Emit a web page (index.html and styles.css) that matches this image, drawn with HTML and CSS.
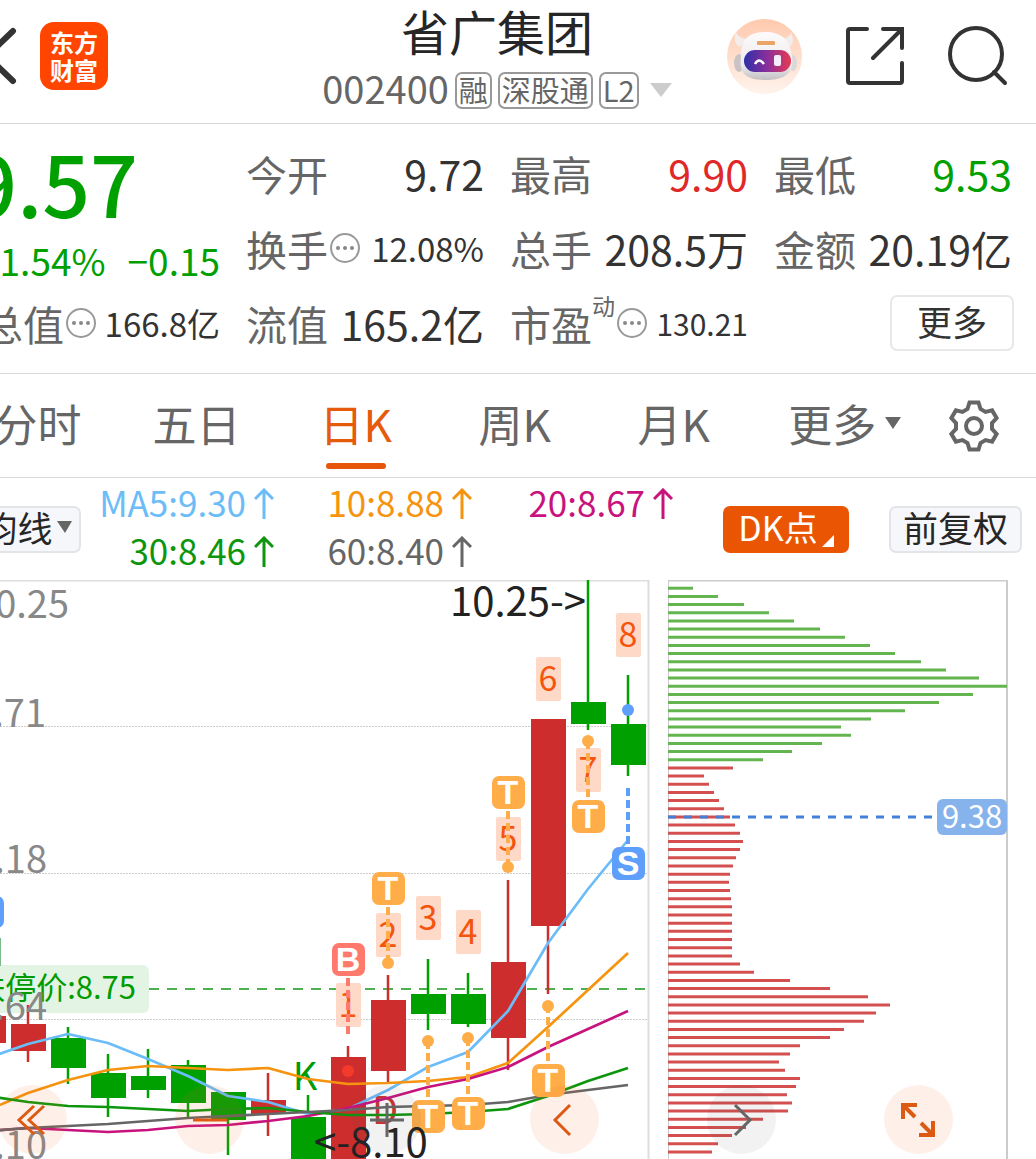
FILE: index.html
```html
<!DOCTYPE html>
<html lang="zh-CN">
<head>
<meta charset="utf-8">
<meta name="viewport" content="width=device-width, initial-scale=1">
<title>省广集团 002400</title>
<link rel="stylesheet" href="styles.css">
</head>
<body>
<div class="screen">
  <header class="topbar">
    <div class="topbar-left">
      <button class="icon-btn" aria-label="返回">
        <svg width="36" height="60" viewBox="0 0 36 60"><path d="M31 5 5 30 31 55" fill="none" stroke="#333" stroke-width="6" stroke-linecap="round"/></svg>
      </button>
      <a class="logo" href="#"><span>东方</span><span>财富</span></a>
    </div>
    <div class="title">
      <h1>省广集团</h1>
      <div class="subtitle">
        <span class="code">002400</span>
        <span class="tag">融</span><span class="tag">深股通</span><span class="tag">L2</span>
        <svg class="drop" width="22" height="16" viewBox="0 0 22 16"><path d="M0 1H22L11 15Z" fill="#ccc"/></svg>
      </div>
    </div>
    <div class="topbar-right">
      <button class="icon-btn" aria-label="智能助手">
        <svg width="75" height="75" viewBox="0 0 75 75">
          <defs>
            <linearGradient id="halo" x1="0" y1="0" x2="0" y2="1"><stop offset="0" stop-color="#ffc9ae"/><stop offset="1" stop-color="#fff3ec"/></linearGradient>
            <linearGradient id="visor" x1="0" y1="0" x2="1" y2="0"><stop offset="0" stop-color="#2f2fa8"/><stop offset=".5" stop-color="#8a2f9c"/><stop offset="1" stop-color="#e63b50"/></linearGradient>
            <linearGradient id="shell" x1="0" y1="0" x2="0" y2="1"><stop offset="0" stop-color="#fdfbfb"/><stop offset=".7" stop-color="#eceaec"/><stop offset="1" stop-color="#c3bfc3"/></linearGradient>
          </defs>
          <circle cx="37.500" cy="37.500" r="37.500" fill="url(#halo)"/>
          <path d="M9 13Q5 24 13 28L21 20Q11 20 9 13ZM64 13Q69 24 62 28L53 20Q63 20 64 13Z" fill="#f3edec"/>
          <ellipse cx="12" cy="44" rx="5" ry="9" fill="#c9c3c6"/><ellipse cx="66" cy="44" rx="4" ry="8" fill="#dcd8da"/>
          <path d="M14 38C14 20 22 13 38 13S63 20 65 38C67 54 58 61 38 61S12 54 14 38Z" fill="url(#shell)"/>
          <rect x="30" y="22" width="18" height="4" rx="1" fill="#eaa465"/>
          <rect x="17" y="31" width="47" height="22" rx="11" fill="url(#visor)"/>
          <path d="M28 45q4-7 9 0" fill="none" stroke="#fff" stroke-width="2.500"/>
          <rect x="47" y="36" width="7" height="11" rx="2" fill="#f3eefc"/>
        </svg>
      </button>
      <button class="icon-btn" aria-label="分享">
        <svg width="58" height="58" viewBox="0 0 58 58"><path d="M21 2H4Q2 2 2 4V54Q2 56 4 56H54Q56 56 56 54V36M37 2H56V21M56 2 27 31" fill="none" stroke="#333" stroke-width="4" stroke-linecap="round"/></svg>
      </button>
      <button class="icon-btn" aria-label="搜索">
        <svg width="60" height="60" viewBox="0 0 60 60"><circle cx="28" cy="28" r="26" fill="none" stroke="#333" stroke-width="4"/><path d="M46 46 57 57" stroke="#333" stroke-width="4" stroke-linecap="round"/></svg>
      </button>
    </div>
  </header>

  <section class="stats">
    <div class="price down">9.57</div>
    <div class="stat"><span class="label">今开</span><span class="value">9.72</span></div>
    <div class="stat"><span class="label">最高</span><span class="value up">9.90</span></div>
    <div class="stat"><span class="label">最低</span><span class="value down">9.53</span></div>

    <div class="change down"><span>-1.54%</span><span>−0.15</span></div>
    <div class="stat"><span class="label">换手</span><svg class="info" width="30" height="30" viewBox="0 0 30 30"><use href="#more-dots"/></svg><span class="value mid">12.08%</span></div>
    <div class="stat"><span class="label">总手</span><span class="value">208.5万</span></div>
    <div class="stat"><span class="label">金额</span><span class="value">20.19亿</span></div>

    <div class="stat"><span class="label">总值</span><svg class="info" width="30" height="30" viewBox="0 0 30 30"><g id="more-dots"><circle cx="15" cy="15" r="14" fill="none" stroke="#999" stroke-width="2"/><circle cx="8" cy="15" r="2" fill="#888"/><circle cx="15" cy="15" r="2" fill="#888"/><circle cx="22" cy="15" r="2" fill="#888"/></g></svg><span class="value mid">166.8亿</span></div>
    <div class="stat"><span class="label">流值</span><span class="value">165.2亿</span></div>
    <div class="stat"><span class="label">市盈<sup>动</sup></span><svg class="info" width="30" height="30" viewBox="0 0 30 30"><use href="#more-dots"/></svg><span class="value small">130.21</span></div>
    <div class="stat"><button class="more">更多</button></div>
  </section>

  <nav class="tabs">
    <button>分时</button>
    <button>五日</button>
    <button class="active">日K</button>
    <button>周K</button>
    <button>月K</button>
    <button class="tab-more">更多<svg width="16" height="14" viewBox="0 0 16 14"><path d="M0 1H16L8 13Z" fill="#666"/></svg></button>
    <button class="settings" aria-label="设置">
      <svg width="52" height="52" viewBox="-26 -26 52 52" fill="none" stroke="#666" stroke-width="4"><path d="M-4.500-23.500H4.500L6.500-17 11.500-14.100 18.100-15.600 22.600-7.900 18-2.900V2.900L22.600 7.900 18.100 15.600 11.500 14.100 6.500 17 4.500 23.500H-4.500L-6.500 17-11.500 14.100-18.100 15.600-22.600 7.900-18 2.900V-2.900L-22.600-7.900-18.100-15.600-11.500-14.100-6.500-17Z"/><circle r="8"/></svg>
    </button>
  </nav>

  <section class="indicators">
    <button class="chip average">均线<svg width="15" height="12" viewBox="0 0 15 12"><path d="M0 0H15L8 12Z" fill="#666"/></svg></button>
    <div class="legend">
      <span class="ma5">MA5:9.30<svg width="20" height="32" viewBox="0 0 20 32"><path id="arrow" d="M10 31V2M1 11 10 2 19 11" fill="none" stroke="currentColor" stroke-width="3"/></svg></span>
      <span class="ma10">10:8.88<svg width="20" height="32" viewBox="0 0 20 32"><use href="#arrow"/></svg></span>
      <span class="ma20">20:8.67<svg width="20" height="32" viewBox="0 0 20 32"><use href="#arrow"/></svg></span>
      <span class="ma30">30:8.46<svg width="20" height="32" viewBox="0 0 20 32"><use href="#arrow"/></svg></span>
      <span class="ma60">60:8.40<svg width="20" height="32" viewBox="0 0 20 32"><use href="#arrow"/></svg></span>
    </div>
    <button class="chip dk">DK点<svg width="12" height="12" viewBox="0 0 12 12"><path d="M12 0V12H0Z" fill="#fff"/></svg></button>
    <button class="chip adjust">前复权</button>
  </section>

  <section class="charts">
    <svg class="kline" viewBox="-42 580 692 579" role="img" aria-label="日K线图">
      <path d="M-42 580.500H648.500V1159" fill="none" stroke="#ddd" stroke-width="2"/>
      <path d="M-42 726.500H648M-42 873.500H648M-42 1019.500H648" stroke="#ccc" stroke-dasharray="2 1"/>
      <rect x="-60" y="965" width="209" height="48" rx="6" fill="#e3f4e5"/>
      <path d="M149 989H648" stroke="#4caf50" stroke-width="2" stroke-dasharray="10 8"/>
      <text x="136" y="999" class="t-limit" text-anchor="end">跌停价:8.75</text>
      <g id="candles"></g>
      <rect x="-29" y="896" width="33" height="32" rx="7" fill="#5f9ffc"/>
      <path d="M0 938V966" stroke="#7cb98a" stroke-width="2"/>
      <g class="axis" text-anchor="end">
        <text x="69" y="618">10.25</text><text x="46" y="727">9.71</text><text x="47" y="873">9.18</text><text x="47" y="1020">8.64</text><text x="47" y="1159">8.10</text>
      </g>
      <g class="signal" text-anchor="middle">
        <text x="305" y="1090" fill="#009b00">K</text><text x="385" y="1124" fill="#c33">D</text>
      </g>
      <g fill="none" stroke-width="2.700" stroke-linejoin="round">
        <path stroke="#6cbcf8" d="M-12 1058 28 1044 68 1034 108 1043 148 1059 188 1076 228 1096 268 1102 308 1114 348 1109 388 1090 428 1067 468 1052 508 1011 548 943 588 889 628 840"/>
        <path stroke="#f6930f" d="M-12 1110 28 1093 68 1080 108 1070 148 1066 188 1068 228 1070 268 1068 308 1079 348 1084 388 1083 428 1081 468 1077 508 1063 548 1027 588 990 628 953"/>
        <path stroke="#c8127d" d="M-12 1131 28 1128 68 1130 108 1132 148 1130 188 1126 228 1125 268 1121 308 1116 348 1108 388 1098 428 1087 468 1079 508 1067 548 1047 588 1029 628 1011"/>
        <path stroke="#0d960d" d="M-12 1096 28 1102 68 1106 108 1107 148 1109 188 1111 228 1109 268 1108 308 1112 348 1115 388 1115 428 1114 468 1112 508 1109 548 1096 588 1081 628 1068"/>
        <path stroke="#666" d="M-12 1131 28 1128 108 1124 188 1118 268 1114 348 1110 388 1107 428 1106 468 1105 508 1102 548 1095 588 1090 628 1085"/>
      </g>
      <g id="counts" class="count" text-anchor="middle"></g>
      <g id="marks" class="mark" text-anchor="middle"></g>
      <g class="extreme"><text x="586" y="616" text-anchor="end">10.25-&gt;</text><text x="314" y="1157">&lt;-8.10</text></g>
    </svg>
    <svg class="chips" viewBox="668 580 340 579" role="img" aria-label="筹码分布">
      <path d="M668 1159V580.500H1007V1159" fill="none" stroke="#ccc" stroke-width="2"/>
      <g id="bars" stroke-width="3"></g>
      <path d="M668 817H935" stroke="#4280d8" stroke-width="3" stroke-dasharray="8 8"/>
      <rect x="937" y="799" width="70" height="36" rx="6" fill="#86b3ec"/>
      <text x="972" y="828" class="t-price" text-anchor="middle">9.38</text>
    </svg>
    <div class="floaters">
      <button aria-label="快退"><svg width="40" height="40" viewBox="-20 -20 40 40"><path d="M1-14-14 0 1 14M11-14-4 0 11 14"/></svg></button>
      <button aria-label="缩小"><svg width="40" height="40" viewBox="-20 -20 40 40"><path d="M-17 0H17"/></svg></button>
      <button class="mute" aria-label="放大"><svg width="40" height="40" viewBox="-20 -20 40 40"><path d="M-17 0H17M0-17V17"/></svg></button>
      <button aria-label="左移"><svg width="40" height="40" viewBox="-20 -20 40 40"><path d="M6-15-9 0 6 15"/></svg></button>
      <button class="mute" aria-label="右移"><svg width="40" height="40" viewBox="-20 -20 40 40"><path d="M-6-15 9 0-6 15"/></svg></button>
      <button aria-label="全屏"><svg width="40" height="40" viewBox="-20 -20 40 40"><path stroke-width="4" d="M-15-1V-15H-1M-15-15-3-3M15 1V15H1M15 15 3 3"/></svg></button>
    </div>
  </section>
</div>
<script src="chart.js"></script>
</body>
</html>
```
FILE: styles.css
```css
* { box-sizing: border-box; }
body {
  margin: 0;
  background: #fff;
  color: #333;
  font-family: "Noto Sans CJK SC", "Noto Sans", sans-serif;
  overflow-x: hidden;
}
button {
  border: 0;
  padding: 0;
  background: none;
  color: inherit;
  font: inherit;
  cursor: pointer;
}
svg { display: block; flex: none; }

/* The screen is wider than the viewport and runs off its left edge. */
.screen { margin-left: -42px; overflow: hidden; }

.topbar {
  display: grid;
  grid-template-columns: 1fr auto 1fr;
  height: 124px;
  border-bottom: 1px solid #d8d8d8;
}
.topbar-left, .topbar-right { display: flex; align-items: center; height: 112px; }
.topbar-left { padding-left: 24px; gap: 22px; }
.topbar-right { justify-content: flex-end; padding-right: 28px; gap: 44px; }
.logo {
  display: flex;
  flex-direction: column;
  justify-content: center;
  width: 68px;
  height: 68px;
  border-radius: 14px;
  background: #ff4500;
  color: #fff;
  font-size: 24px;
  font-weight: 700;
  line-height: 28px;
  text-align: center;
  text-decoration: none;
}
.title { text-align: center; }
.title h1 {
  margin: 0;
  color: #262626;
  font-size: 48px;
  font-weight: 400;
  line-height: 60px;
}
.subtitle { display: flex; align-items: center; gap: 6px; height: 60px; color: #666; }
.code { font-size: 38px; line-height: 52px; padding-bottom: 4px; }
.tag {
  height: 37px;
  padding: 0 2px;
  border: 2px solid #999;
  border-radius: 7px;
  font-size: 29px;
  line-height: 31px;
}
.drop { margin-left: 5px; }

.stats {
  display: grid;
  grid-template-columns: repeat(4, minmax(0, 1fr));
  grid-auto-rows: 75px;
  column-gap: 26px;
  padding: 11px 24px 13px;
  border-bottom: 1px solid #d8d8d8;
}
.stat { display: flex; align-items: center; white-space: nowrap; font-size: 41px; }
.label { color: #666; }
.label sup { font-size: 23px; line-height: 0; vertical-align: 26px; }
.value { margin-left: auto; }
.mid { font-size: 33px; }
.small { font-size: 30px; }
.info { margin-left: 2px; }
.up { color: #e02828; }
.down { color: #00a000; }
.price {
  justify-self: end;
  padding-right: 82px;
  font-size: 84px;
  font-weight: 500;
  line-height: 94px;
}
.change {
  display: flex;
  justify-content: flex-end;
  align-items: flex-end;
  gap: 22px;
  font-size: 37px;
  line-height: 50px;
}
.more {
  width: 124px;
  height: 56px;
  margin-left: auto;
  margin-right: -2px;
  padding-bottom: 4px;
  border: 2px solid #e8e8e8;
  border-radius: 7px;
  font-size: 35px;
  line-height: 48px;
}

.tabs {
  display: grid;
  grid-template-columns: repeat(6, 9fr) 7fr;
  height: 104px;
  border-bottom: 1px solid #d8d8d8;
  color: #666;
  font-size: 44px;
}
.tabs button {
  position: relative;
  display: flex;
  align-items: center;
  justify-content: center;
  padding-bottom: 5px;
  white-space: nowrap;
}
.tabs .settings { padding-bottom: 0; }
.tabs .active { color: #e65a0c; }
.tabs .active::after {
  content: "";
  position: absolute;
  bottom: 8px;
  width: 60px;
  height: 6px;
  border-radius: 3px;
  background: #e6550a;
}
.tabs .tab-more { gap: 9px; padding-left: 24px; }

.indicators { display: flex; align-items: center; height: 102px; padding: 0 14px 0 23px; }
.chip {
  display: flex;
  align-items: center;
  justify-content: center;
  gap: 4px;
  width: 100px;
  height: 47px;
  padding-bottom: 4px;
  border: 2px solid #e2e4e8;
  border-radius: 7px;
  background: #f6f7fa;
  color: #262626;
  font-size: 35px;
  line-height: 40px;
  white-space: nowrap;
}
.average { padding-right: 8px; }
.legend {
  display: grid;
  grid-template-columns: 193px 198px 201px;
  grid-auto-rows: 48px;
  font-size: 35px;
  line-height: 42px;
}
.legend span {
  display: flex;
  align-items: center;
  justify-content: flex-end;
  gap: 8px;
  padding-bottom: 6px;
}
.legend svg { margin-top: 4px; }
.dk {
  width: 126px;
  margin-left: auto;
  border-color: #ea5504;
  background: #ea5504;
  color: #fff;
  font-size: 34px;
}
.dk svg { align-self: flex-end; }
.adjust { width: 133px; margin-left: 40px; }
.ma5 { color: #6cbcf8; }
.ma10 { color: #f6930f; }
.ma20 { color: #c8127d; }
.ma30 { color: #0d960d; }
.ma60 { color: #666; }

.charts {
  position: relative;
  display: grid;
  grid-template-columns: 692fr 340fr;
  column-gap: 18px;
  padding-right: 28px;
}
.charts > svg { width: 100%; height: auto; }
.axis { font-size: 38px; fill: #888; }
.t-limit { font-size: 31px; fill: #009b00; }
.t-price { font-size: 31px; fill: #fff; }
.signal { font-size: 38px; }
.count { font-size: 34px; fill: #f5540c; }
.mark { font-family: "Liberation Sans", Arial, sans-serif; font-size: 34px; font-weight: 700; fill: #fff; }
.extreme { font-size: 40px; fill: #222; }

.floaters {
  position: absolute;
  right: 83px;
  bottom: 5px;
  left: 40px;
  display: flex;
  justify-content: space-between;
}
.floaters button {
  display: grid;
  place-items: center;
  width: 69px;
  height: 69px;
  border-radius: 50%;
  background: rgba(250, 110, 40, .1);
}
.floaters .mute { background: rgba(90, 90, 90, .08); }
.floaters svg { fill: none; stroke: #dc5a14; stroke-width: 3px; }
.floaters .mute svg { stroke: #666; }
```
FILE: chart.js
```js
const RED = '#ce2d2d';
const GREEN = '#00a000';

// centre x, colour, wick top, body top, body bottom, wick bottom
const candles = [
  [-12, RED, 1010, 1016, 1043, 1050], [28, RED, 1005, 1024, 1051, 1062],
  [68, GREEN, 1027, 1038, 1068, 1084], [108, GREEN, 1054, 1073, 1098, 1117],
  [148, GREEN, 1049, 1076, 1090, 1098], [188, GREEN, 1060, 1065, 1103, 1117],
  [228, GREEN, 1092, 1092, 1120, 1155], [268, RED, 1073, 1100, 1114, 1136],
  [308, GREEN, 1095, 1117, 1160, 1160], [348, RED, 1046, 1057, 1160, 1160],
  [388, RED, 975, 1000, 1071, 1082], [428, GREEN, 959, 994, 1014, 1030],
  [468, GREEN, 973, 994, 1024, 1027], [508, RED, 880, 962, 1038, 1070],
  [548, RED, 719, 719, 926, 994], [588, GREEN, 580, 702, 724, 730],
  [628, GREEN, 675, 724, 765, 776]
];
document.getElementById('candles').innerHTML = candles.map(([x, c, high, top, bottom, low]) =>
  `<path d="M${x} ${high}V${low}" stroke="${c}" stroke-width="2.5"/><rect x="${x - 17}" y="${top}" width="35" height="${bottom - top}" fill="${c}"/>`
).join('');

// sequence numbers: label, centre x, centre y
const counts = [[1, 348, 1005], [2, 388, 935], [3, 428, 918], [4, 468, 932], [5, 508, 839], [6, 548, 679], [7, 588, 770], [8, 628, 635]];
document.getElementById('counts').innerHTML = counts.map(([n, x, y]) =>
  `<rect x="${x - 12}" y="${y - 22}" width="25" height="44" rx="2" fill="#ffd9c8"/><text x="${x}" y="${y + 12}">${n}</text>`
).join('');

// trade marks: letter, x, badge y, dot y, colour
const marks = [
  ['B', 348, 959, 1071, '#ff7a6c'], ['T', 388, 888, 963, '#ffad49'], ['T', 508, 792, 867, '#ffad49'],
  ['T', 588, 816, 741, '#ffad49'], ['T', 548, 1080, 1006, '#ffad49'], ['T', 428, 1116, 1041, '#ffad49'],
  ['T', 468, 1113, 1038, '#ffad49'], ['S', 628, 863, 710, '#5f9ffc']
];
document.getElementById('marks').innerHTML = marks.map(([t, x, y, dot, c]) => {
  const side = Math.sign(dot - y);
  const start = y + side * 19;
  const end = t === 'B' ? 1034 : t === 'S' ? 788 : dot;
  const dotColor = t === 'B' ? '#f43a2a' : c;
  return `<path d="M${x} ${start}V${end}" stroke="${c}" stroke-width="4" stroke-dasharray="8 4"/>` +
    `<circle cx="${x}" cy="${dot}" r="6" fill="${dotColor}"/>` +
    `<rect x="${x - 16}" y="${y - 16}" width="33" height="33" rx="7" fill="${c}"/><text x="${x}" y="${y + 12}">${t}</text>`;
}).join('');

// chip distribution, right end of each bar counted from the panel's left edge, in thirds
const chips = [
  76, 151, 227, 303, 379, 455, 530, 606, 682, 758, 834, 933, 1017, 915, 812, 710, 608, 520, 549, 461, 372, 284,
  195, 108, 122, 138, 153, 168, 185, 200, 215, 224, 215, 205, 196, 187, 182, 186, 189, 191, 191, 191, 191, 191, 191, 191,
  215, 257, 365, 486, 599, 665, 623, 588, 529, 487, 395, 365, 332, 350, 396, 383, 357, 372, 359, 284, 234, 191, 150, 131
];
document.getElementById('bars').innerHTML = chips.map((w, i) =>
  `<path d="M668 ${(588.2 + i * 8.17).toFixed(1)}h${Math.round(w / 3)}" stroke="${i < 22 ? '#64b450' : '#d45050'}"/>`
).join('');
```
